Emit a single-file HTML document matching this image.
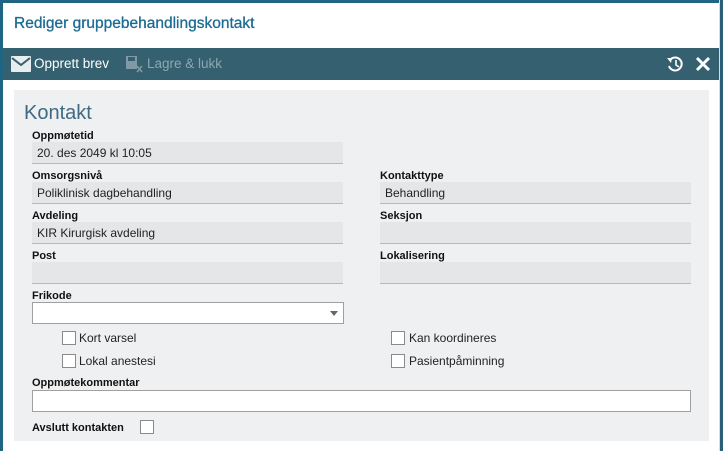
<!DOCTYPE html>
<html><head><meta charset="utf-8"><style>
*{box-sizing:border-box;margin:0;padding:0}
body{width:723px;height:451px;background:#fff;position:relative;overflow:hidden;font-family:"Liberation Sans",sans-serif;font-size:12px;color:#222}
.a{position:absolute}
.lbl{position:absolute;font-weight:bold;font-size:11px;color:#111}
.f{position:absolute;height:22px;background:#e4e6e8;border-bottom:1px solid #b4b8bc;font-size:12px;padding:4px 0 0 5px;color:#222}
.cb{position:absolute;width:14px;height:14px;border:1px solid #8a8a8a;background:#fff}
.ct{position:absolute;font-size:12px;color:#222}
</style></head><body>
<div class="a" style="left:0;top:0;width:723px;height:3px;background:#1e6583"></div>
<div class="a" style="left:0;top:0;width:3px;height:451px;background:#1e6583"></div>
<div class="a" style="left:719px;top:0;width:1px;height:451px;background:#d8dde0"></div>
<div class="a" style="left:720px;top:0;width:3px;height:451px;background:#2a5f78"></div>
<div class="a" style="left:14px;top:15px;font-size:15.5px;color:#1d6b92;-webkit-text-stroke:0.3px #1d6b92">Rediger gruppebehandlingskontakt</div>
<div class="a" style="left:3px;top:48px;width:716px;height:32px;background:#34606f"></div>
<svg class="a" style="left:11px;top:56px" width="20" height="16" viewBox="0 0 20 16"><rect x="0" y="0" width="20" height="16" rx="1" fill="#e8eef0"/><path d="M1 2 L10 9 L19 2" stroke="#34606f" stroke-width="2" fill="none"/></svg>
<div class="a" style="left:34px;top:56px;font-size:13.5px;color:#fff">Opprett brev</div>
<svg class="a" style="left:126px;top:56px" width="18" height="17" viewBox="0 0 18 17"><rect x="0" y="0" width="11" height="13" fill="#7f9aa4"/><rect x="2" y="1" width="7" height="4" fill="#34606f"/><path d="M11 10 L16 16 M16 10 L11 16" stroke="#7f9aa4" stroke-width="1.6"/></svg>
<div class="a" style="left:147px;top:56px;font-size:13.5px;color:#8fa7b0">Lagre &amp; lukk</div>
<svg class="a" style="left:666px;top:55px" width="18" height="18" viewBox="0 0 18 18"><path d="M4 5 A6.5 6.5 0 1 1 3 11" stroke="#fff" stroke-width="2" fill="none"/><path d="M1 3 L6 3 L5 8 Z" fill="#fff"/><path d="M10 5 L10 10 L13 12" stroke="#fff" stroke-width="1.6" fill="none"/></svg>
<svg class="a" style="left:695px;top:56px" width="16" height="16" viewBox="0 0 16 16"><path d="M2 2 L14 14 M14 2 L2 14" stroke="#fff" stroke-width="3"/></svg>
<div class="a" style="left:14px;top:90px;width:695px;height:351px;background:#eff0f2"></div>
<div class="a" style="left:24px;top:102px;font-size:20px;color:#3f6a82">Kontakt</div>
<div class="lbl" style="left:32px;top:130px">Oppmøtetid</div>
<div class="f" style="left:32px;top:142px;width:311px">20. des 2049 kl 10:05</div>
<div class="lbl" style="left:32px;top:170px">Omsorgsnivå</div>
<div class="f" style="left:32px;top:182px;width:311px">Poliklinisk dagbehandling</div>
<div class="lbl" style="left:380px;top:170px">Kontakttype</div>
<div class="f" style="left:380px;top:182px;width:311px">Behandling</div>
<div class="lbl" style="left:32px;top:210px">Avdeling</div>
<div class="f" style="left:32px;top:222px;width:311px">KIR Kirurgisk avdeling</div>
<div class="lbl" style="left:380px;top:210px">Seksjon</div>
<div class="f" style="left:380px;top:222px;width:311px"></div>
<div class="lbl" style="left:32px;top:250px">Post</div>
<div class="f" style="left:32px;top:262px;width:311px"></div>
<div class="lbl" style="left:380px;top:250px">Lokalisering</div>
<div class="f" style="left:380px;top:262px;width:311px"></div>
<div class="lbl" style="left:32px;top:290px">Frikode</div>
<div class="a" style="left:32px;top:302px;width:312px;height:22px;background:#fff;border:1px solid #a0a0a0"></div>
<div class="a" style="left:330px;top:311px;width:0;height:0;border-left:4px solid transparent;border-right:4px solid transparent;border-top:5px solid #666"></div>
<div class="cb" style="left:62px;top:331px"></div><div class="ct" style="left:79px;top:331px">Kort varsel</div>
<div class="cb" style="left:62px;top:354px"></div><div class="ct" style="left:79px;top:354px">Lokal anestesi</div>
<div class="cb" style="left:391px;top:331px"></div><div class="ct" style="left:409px;top:331px">Kan koordineres</div>
<div class="cb" style="left:391px;top:354px"></div><div class="ct" style="left:409px;top:354px">Pasientpåminning</div>
<div class="lbl" style="left:32px;top:377px">Oppmøtekommentar</div>
<div class="a" style="left:32px;top:390px;width:659px;height:22px;background:#fff;border:1px solid #a0a0a0"></div>
<div class="lbl" style="left:32px;top:422px">Avslutt kontakten</div>
<div class="cb" style="left:140px;top:420px"></div>
</body></html>
